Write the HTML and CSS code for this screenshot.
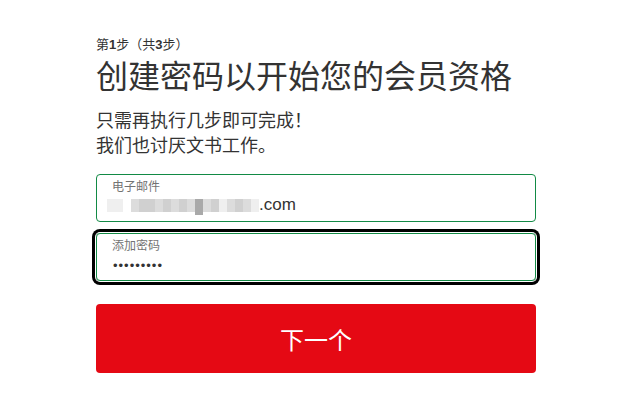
FILE: index.html
```html
<!DOCTYPE html>
<html lang="zh-CN">
<head>
    <meta charset="UTF-8">
    <meta name="viewport" content="width=device-width, initial-scale=1.0">
    <title>创建密码</title>
    <link rel="stylesheet" href="styles.css">
</head>
<body>
    <div class="signup">
        <div class="step">第<b>1</b>步（共<b>3</b>步）</div>
        <h1>创建密码以开始您的会员资格</h1>
        <p class="intro">只需再执行几步即可完成！<br>我们也讨厌文书工作。</p>

        <form class="signup-form">
            <div class="field">
                <label>电子邮件</label>
                <div class="value">
                    <span class="blur">
                        <i class="b1"></i><i class="b1"></i><i class="b0"></i><i class="b2"></i><i class="b3"></i><i class="b3"></i><i class="b2"></i><i class="b3"></i><i class="b2"></i><i class="b3"></i><i class="b2"></i><i class="b4"></i><i class="b2"></i><i class="b3"></i><i class="b1"></i><i class="b2"></i><i class="b3"></i><i class="b2"></i><i class="b1"></i>
                    </span>.com
                </div>
            </div>
            <div class="field focused">
                <label>添加密码</label>
                <div class="value dots">•••••••••</div>
            </div>
            <button type="button" class="next">下一个</button>
        </form>
    </div>
</body>
</html>
```

FILE: styles.css
```css
body {
    margin: 0;
    background-color: #fff;
    color: #333;
    font-family: "Liberation Sans", "Noto Sans CJK SC", Arial, sans-serif;
}

.signup {
    width: 440px;
    padding: 35px 0 0 96px;
}

.step {
    font-size: 13px;
    line-height: 20px;
}

.step b {
    font-weight: bold;
}

h1 {
    margin: 0;
    font-size: 32px;
    line-height: 44px;
    font-weight: normal;
}

.intro {
    margin: 10px 0 0;
    font-size: 18px;
    line-height: 25px;
}

.signup-form {
    margin-top: 15px;
}

.field {
    height: 48px;
    box-sizing: border-box;
    padding: 5px 15px 5px;
    border: 1px solid #128a45;
    border-radius: 4px;
    margin-bottom: 11px;
}

.field.focused {
    box-shadow: 0 0 0 1px #fff, 0 0 0 4px #000;
    border-radius: 4px;
}

.field label {
    display: block;
    font-size: 12px;
    line-height: 14px;
    color: #737373;
}

.value {
    font-size: 17px;
    line-height: 22px;
    color: #333;
}

.blur {
    display: inline-flex;
    align-items: flex-start;
    margin-left: -5px;
    vertical-align: -2px;
}

.blur i {
    width: 8px;
    height: 13px;
}

.blur .b0 { background-color: #fff; }
.blur .b1 { background-color: #efefef; }
.blur .b2 { background-color: #dcdcdc; }
.blur .b3 { background-color: #d0d0d0; }
.blur .b4 { background-color: #a9a9a9; height: 16px; }

.dots {
    font-size: 13px;
    letter-spacing: 1px;
    padding-top: 2px;
    padding-left: 1px;
}

.next {
    display: block;
    width: 100%;
    height: 69px;
    margin-top: 23px;
    border: none;
    border-radius: 4px;
    background-color: #e50914;
    color: #fff;
    font-family: "Liberation Sans", "Noto Sans CJK SC", sans-serif;
    font-size: 24px;
    cursor: pointer;
}
```
